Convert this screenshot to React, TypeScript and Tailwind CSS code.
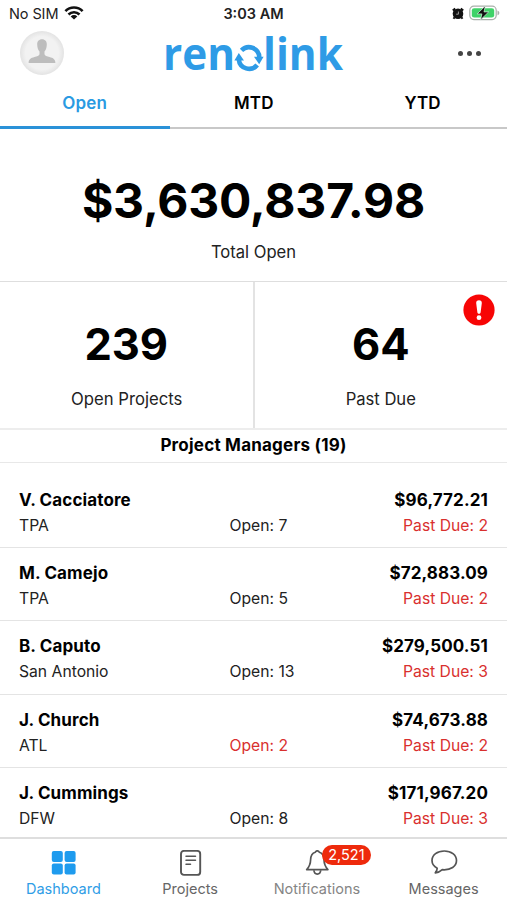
import React from "react";

type Manager = {
  name: string;
  city: string;
  open: number;
  total: string;
  pastDue: number;
  late?: boolean;
};

const managers: Manager[] = [
  { name: "V. Cacciatore", city: "TPA", open: 7, total: "$96,772.21", pastDue: 2 },
  { name: "M. Camejo", city: "TPA", open: 5, total: "$72,883.09", pastDue: 2 },
  { name: "B. Caputo", city: "San Antonio", open: 13, total: "$279,500.51", pastDue: 3 },
  { name: "J. Church", city: "ATL", open: 2, total: "$74,673.88", pastDue: 2, late: true },
  { name: "J. Cummings", city: "DFW", open: 8, total: "$171,967.20", pastDue: 3 },
];

function WifiIcon() {
  return (
    <svg className="-mt-[2px]" width="20" height="14" viewBox="0 0 20 14" fill="none" stroke="#111" strokeWidth="2.6">
      <path d="M1.4 5.1a12 12 0 0 1 17.2 0" />
      <path d="M4.5 8.5a7.7 7.7 0 0 1 11 0" />
      <path d="M10 13.6l-3.3-3.2a4.6 4.6 0 0 1 6.6 0z" fill="#111" stroke="none" />
    </svg>
  );
}

function AlarmIcon() {
  return (
    <svg width="12" height="13" viewBox="0 0 12 13">
      <circle cx="6" cy="6.800" r="5.300" fill="#111" />
      <path d="M.8 3.600L3.200 1.400M11.200 3.600L8.800 1.400M2.600 10.200l-1.100 1.600M9.400 10.200l1.100 1.600" stroke="#111" strokeWidth="2" />
      <path d="M6.400 4.500v2.700H4.200" stroke="#aaa" strokeWidth=".9" fill="none" />
    </svg>
  );
}

function BatteryIcon() {
  return (
    <svg width="31" height="16" viewBox="0 0 31 16">
      <rect x=".8" y="1.200" width="26.400" height="13.400" rx="4" fill="#fff" stroke="#a9b0aa" strokeWidth="1.200" />
      <rect x="2.800" y="3.200" width="22.400" height="9.400" rx="2.400" fill="#3fd268" />
      <path d="M28.500 5.600v4.600c1.200-.4 1.800-1.300 1.800-2.300s-.6-1.900-1.800-2.300z" fill="#a9b0aa" />
      <path d="M16.400.8L8.200 8.900h4.700l-1.400 6L19.700 6.900H15z" fill="#111" stroke="#d9f5e0" strokeWidth=".7" />
    </svg>
  );
}

function Avatar() {
  return (
    <svg width="44" height="44" viewBox="0 0 44 44">
      <defs>
        <radialGradient id="avatar">
          <stop offset=".75" stopColor="#f2f2f2" />
          <stop offset="1" stopColor="#e3e3e3" />
        </radialGradient>
      </defs>
      <circle cx="22" cy="22" r="22" fill="url(#avatar)" />
      <path
        d="M22 8.2c-3.200 0-5 2.300-4.800 5.500.1 3 .9 5.300 2.300 6.700v2.800c-.4 1.500-2.400 2.100-5 2.900C10.800 27.200 8.700 28.200 8.600 32h26.800c-.1-3.800-2.200-4.800-5.900-5.900-2.600-.8-4.600-1.400-5-2.900v-2.800c1.400-1.400 2.200-3.700 2.300-6.700.2-3.200-1.600-5.500-4.800-5.500z"
        fill="#bdbdbd"
      />
    </svg>
  );
}

function Logo() {
  return (
    <svg className="overflow-visible" width="180" height="48" viewBox="0 0 180 48" fill="#2e9be6">
      <g fontFamily="'Open Sans', 'Noto Sans', sans-serif" fontSize="45.500" fontWeight="700">
        <text x="-2" y="39" textLength="72" lengthAdjust="spacingAndGlyphs">ren</text>
        <text x="98" y="39" textLength="80" lengthAdjust="spacingAndGlyphs">link</text>
      </g>
      <g fill="none" stroke="#2e9be6" strokeWidth="4.600">
        <path d="M73.800 28.500a10.400 10.400 0 0 0 18.400 5.500" />
        <path d="M94.300 26.500a10.400 10.400 0 0 0-17.800-7.200" />
      </g>
      <path d="M69.400 29.500l4.400-7.500 5.200 7.500z" />
      <path d="M89 25.800h9.600l-4.400 7.400z" />
    </svg>
  );
}

function AlertIcon() {
  return (
    <svg className="absolute right-[12.500px] top-[12px]" width="32" height="32" viewBox="0 0 32 32">
      <circle cx="16" cy="16" r="15.600" fill="#f70505" />
      <path d="M16 6.200c1.900 0 3 1.200 2.800 3.100l-1.200 9.200c-.3 1.700-2.900 1.700-3.200 0l-1.200-9.200c-.2-1.900.9-3.100 2.800-3.100z" fill="#fff" />
      <circle cx="16" cy="23.700" r="2.400" fill="#fff" />
    </svg>
  );
}

function DashboardIcon() {
  return (
    <svg width="26" height="28" viewBox="0 0 26 28" fill="#1e9bee">
      <rect x="1.800" y="1" width="11" height="11" rx="2" />
      <rect x="14.600" y="1" width="11" height="11" rx="2" />
      <rect x="1.800" y="13.500" width="11" height="11" rx="2" />
      <rect x="14.600" y="13.500" width="11" height="11" rx="2" />
    </svg>
  );
}

function ProjectsIcon() {
  return (
    <svg width="26" height="28" viewBox="0 0 26 28" fill="none" stroke="#555" strokeLinecap="round">
      <rect x="4" y=".9" width="19.200" height="24" rx="3" strokeWidth="1.900" />
      <path d="M9 6.200h9.500M9 10.200h9.500M9 14.200h4.500" strokeWidth="1.500" />
    </svg>
  );
}

function BellIcon() {
  return (
    <svg width="26" height="28" viewBox="0 0 26 28" fill="none" stroke="#555" strokeWidth="1.700" strokeLinejoin="round">
      <path d="M13.300.8c-1 0-1.700.6-2 1.500-3.600 1.100-4.600 4-4.700 7.500-.1 4.500-1.200 7-3.900 9.800h21.200c-2.700-2.800-3.800-5.300-3.900-9.800-.1-3.500-1.100-6.400-4.700-7.500-.3-.9-1-1.500-2-1.500z" />
      <path d="M9.900 20.300c.2 2.500 1.500 3.800 3.400 3.800s3.200-1.300 3.400-3.800" />
    </svg>
  );
}

function MessageIcon() {
  return (
    <svg width="28" height="28" viewBox="0 0 28 28" fill="none" stroke="#555" strokeWidth="1.700" strokeLinejoin="round">
      <path d="M14.300 1C7.300 1 2 5 2 10.600c0 3.600 2.200 6.100 5.200 7.600-.1 1.800-.6 3.200-1.900 4.600 3-.3 5.200-1.400 7-3.100 8.700.7 14.200-3.500 14.200-9.100C26.500 5 21.200 1 14.300 1z" />
    </svg>
  );
}

const tabItem = "flex flex-1 flex-col items-center pt-[11px]";
const tabLabel = "text-[14.500px] leading-[22px]";

export default function App() {
  return (
    <div className="flex h-[900px] w-[507px] flex-col overflow-hidden bg-white font-['Inter','Liberation_Sans',sans-serif] text-black">
      <div className="grid h-[27px] shrink-0 grid-cols-3 items-center px-[9px] pt-px text-[14.500px] leading-none text-[#222]">
        <div className="flex items-center gap-[6px]">
          <span className="tracking-[-0.1px]">No SIM</span>
          <WifiIcon />
        </div>
        <span className="text-center font-semibold">3:03 AM</span>
        <div className="-mr-[2px] -mt-[2px] flex items-center justify-end gap-[5px]">
          <AlarmIcon />
          <BatteryIcon />
        </div>
      </div>

      <header className="flex h-[51px] shrink-0 items-start pl-[20px] pr-[26px] pt-[4px]">
        <Avatar />
        <div className="ml-[101px]">
          <Logo />
        </div>
        <div className="ml-auto mt-[20px] flex gap-[4px]">
          <span className="size-[5px] rounded-full bg-[#444]" />
          <span className="size-[5px] rounded-full bg-[#444]" />
          <span className="size-[5px] rounded-full bg-[#444]" />
        </div>
      </header>

      <nav className="flex h-[51px] shrink-0 text-center text-[17px] font-semibold leading-[50px] tracking-[0.2px]">
        <div className="w-[169.500px] border-b-[3px] border-[#2a92d8] text-[#2a9ae2]">Open</div>
        <div className="flex-1 border-b-2 border-[#c8c8c8]">MTD</div>
        <div className="flex-1 border-b-2 border-[#c8c8c8]">YTD</div>
      </nav>

      <section className="flex h-[153px] shrink-0 flex-col items-center border-b border-[#dedede] pt-[42px]">
        <div className="text-[48px] font-bold leading-[60px] tracking-[-0.2px]">$3,630,837.98</div>
        <div className="mt-[10px] text-[16.600px] leading-[22px] text-[#222]">Total Open</div>
      </section>

      <section className="flex h-[148px] shrink-0 border-b-2 border-[#ededed] text-center">
        <div className="flex-1 border-r-2 border-[#e3e3e3] pt-[34px]">
          <div className="text-[43.500px] font-bold leading-[56px]">239</div>
          <div className="mt-[16px] pl-px text-[16.700px] leading-[22px] text-[#222]">Open Projects</div>
        </div>
        <div className="relative flex-1 pt-[34px]">
          <div className="text-[43.500px] font-bold leading-[56px]">64</div>
          <div className="mt-[16px] text-[16.600px] leading-[22px] text-[#222]">Past Due</div>
          <AlertIcon />
        </div>
      </section>

      <h2 className="h-[33px] shrink-0 border-b border-[#e8e8e8] text-center text-[17px] font-bold leading-[31px] tracking-[0.220px]">
        Project Managers (19)
      </h2>

      <main className="min-h-0 flex-1 overflow-hidden pt-[11.600px]">
        {managers.map((m) => (
          <div key={m.name} className="h-[73.400px] border-b-[1.500px] border-[#e4e4e4] px-[19px] pt-[13px]">
            <div className="flex justify-between text-[17px] font-bold leading-[24px] tracking-[0.120px]">
              <span>{m.name}</span>
              <span>{m.total}</span>
            </div>
            <div className="mt-[2px] flex text-[15.700px] leading-[24px] text-[#222]">
              <span className="w-[210.500px]">{m.city}</span>
              <span className={m.late ? "text-[#d9302e]" : ""}>Open: {m.open}</span>
              <span className="ml-auto text-[#d9302e]">Past Due: {m.pastDue}</span>
            </div>
          </div>
        ))}
      </main>

      <footer className="flex h-[63px] shrink-0 border-t-2 border-[#dedede] text-[#666]">
        <div className={tabItem}>
          <DashboardIcon />
          <span className={tabLabel + " text-[#2f9de6]"}>Dashboard</span>
        </div>
        <div className={tabItem}>
          <ProjectsIcon />
          <span className={tabLabel}>Projects</span>
        </div>
        <div className={tabItem}>
          <div className="relative">
            <BellIcon />
            <span className="absolute -top-[5px] left-[18px] h-[20px] w-[49px] rounded-full bg-[#ee2a0c] text-center text-[14.500px] leading-[20px] text-white">
              2,521
            </span>
          </div>
          <span className={tabLabel + " text-[#858585]"}>Notifications</span>
        </div>
        <div className={tabItem}>
          <MessageIcon />
          <span className={tabLabel}>Messages</span>
        </div>
      </footer>
    </div>
  );
}
